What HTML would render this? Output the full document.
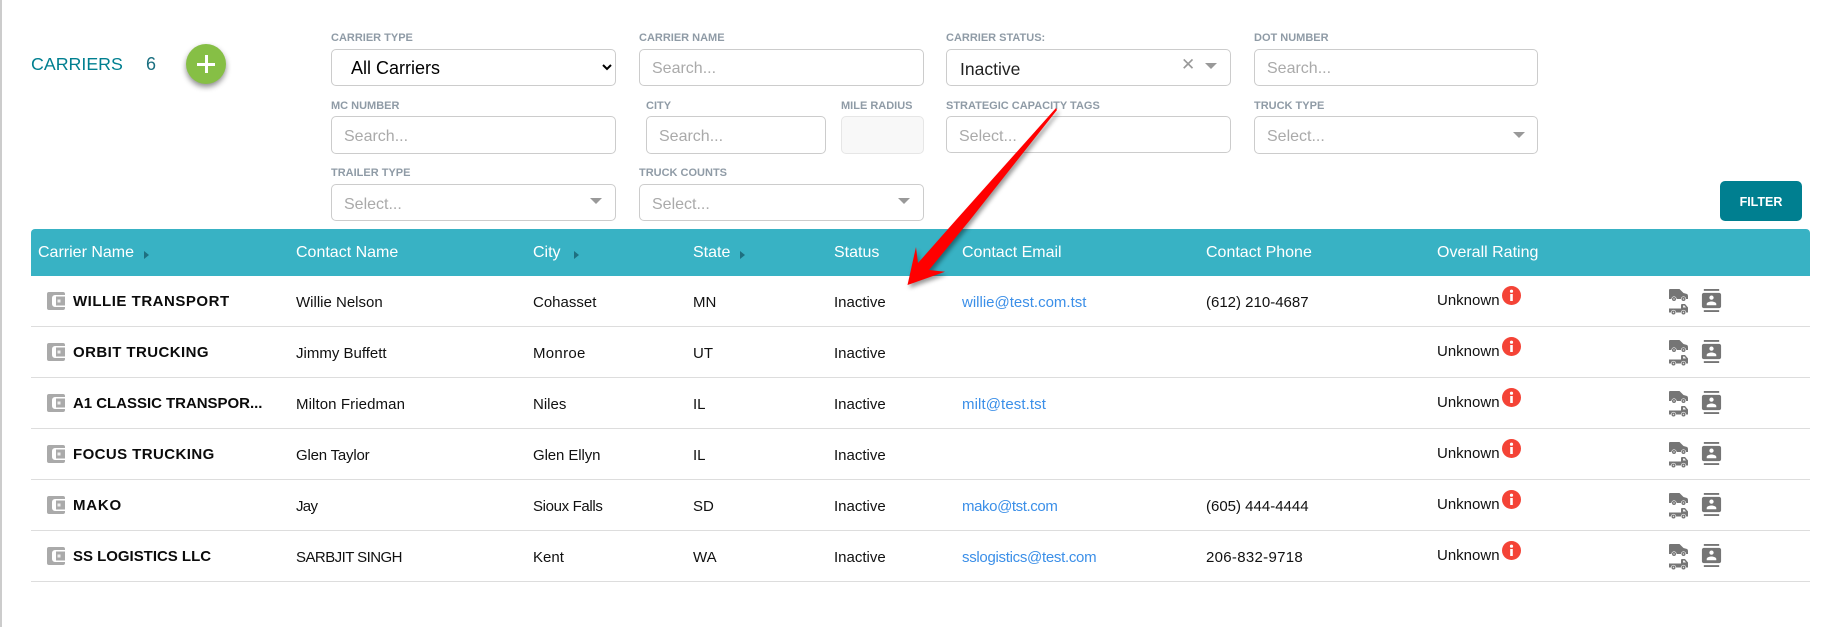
<!DOCTYPE html>
<html lang="en"><head><meta charset="utf-8"><title>Carriers</title>
<style>
*{box-sizing:border-box}
html,body{margin:0;padding:0;background:#fff}
body{width:1834px;height:627px;position:relative;overflow:hidden;font-family:"Liberation Sans",sans-serif;color:#111}
.edge{position:absolute;left:0;top:0;width:1.5px;height:627px;background:#ccc}
.title{position:absolute;left:31px;top:52.5px;font-size:17.8px;line-height:22px;color:#007f90}
.count{position:absolute;left:146px;top:52.5px;font-size:18px;line-height:22px;color:#1a6f80}
.add{position:absolute;left:186px;top:44px;width:40px;height:40px;border-radius:50%;background:#86bf45;box-shadow:0 3px 6px rgba(0,0,0,.45)}
.add:before{content:"";position:absolute;left:11px;top:18.5px;width:18px;height:3px;background:#fff}
.add:after{content:"";position:absolute;left:18.5px;top:11px;width:3px;height:18px;background:#fff}
label{position:absolute;font-size:11px;font-weight:700;line-height:13px;color:#8f9ba6;white-space:nowrap}
.f{position:absolute;border:1.5px solid #ccc;border-radius:5px;background:#fff;height:37px;font-family:"Liberation Sans",sans-serif;font-size:16px;padding:2px 0 0 12px;color:#111;outline:none}
.f.p4{padding-top:4px}
.f::placeholder{color:#aaa;opacity:1}
select.f{font-size:18px;padding:0 0 0 15px;color:#000}
.val{position:absolute;font-size:17.5px;line-height:20px;color:#222}
.tri{position:absolute;width:0;height:0;border-left:6px solid transparent;border-right:6px solid transparent;border-top:6.5px solid #999}
.x{position:absolute;font-size:17px;line-height:18px;color:#999}
.btn{position:absolute;left:1720px;top:181px;width:82px;height:40px;background:#007f90;border:0;border-radius:5px;color:#fff;font:700 12.5px/42px "Liberation Sans",sans-serif;padding:0;text-align:center}
table{position:absolute;left:31px;top:229px;width:1779px;border-collapse:collapse;table-layout:fixed}
th{height:47px;background:#38b2c4;color:#fff;font-weight:400;font-size:16px;text-align:left;padding:0;position:relative;top:0}
th:first-child{padding-left:7px;border-radius:4px 0 0 0}
th:last-child{border-radius:0 4px 0 0}
th span{position:relative;top:.5px}
td{height:51px;padding:0;border-bottom:1px solid #ddd;font-size:15px;white-space:nowrap;vertical-align:middle}
tbody tr:first-child td{height:50px}
td span.t{position:relative;top:2px}
td:first-child{padding-left:16px}
.n{font-weight:700;font-size:15px;letter-spacing:.52px;color:#0b0b0b;position:relative;top:.5px;margin-left:8px;vertical-align:middle}
.wal{vertical-align:middle;position:relative;top:0}
a{color:#3b8fe8;text-decoration:none}
.srt{display:inline-block;width:0;height:0;border-top:4px solid transparent;border-bottom:4px solid transparent;border-left:5px solid #1e6f80;margin-left:10px;position:relative;top:2px}
.srt.c{margin-left:13px}
.unk{position:relative;top:0}
.info{position:absolute;margin:-6px 0 0 2px}
.r{position:relative}
.ic{position:absolute}
.arrow{position:absolute;left:0;top:0;filter:drop-shadow(2px 3px 2px rgba(0,0,0,.4));pointer-events:none}
</style></head><body>
<div class="edge"></div>
<div class="title">CARRIERS</div><div class="count">6</div><div class="add"></div>

<label style="left:331px;top:32px">CARRIER TYPE</label>
<select class="f" style="left:331px;top:49px;width:285px"><option>All Carriers</option></select>
<label style="left:639px;top:32px">CARRIER NAME</label>
<input class="f" style="left:639px;top:49px;width:285px" placeholder="Search...">
<label style="left:946px;top:32px">CARRIER STATUS:</label>
<div class="f" style="left:946px;top:49px;width:285px"></div>
<div class="val" style="left:960px;top:59px">Inactive</div>
<div class="x" style="left:1181px;top:56px">✕</div>
<div class="tri" style="left:1204.5px;top:63px"></div>
<label style="left:1254px;top:32px">DOT NUMBER</label>
<input class="f" style="left:1254px;top:49px;width:284px" placeholder="Search...">

<label style="left:331px;top:99.5px">MC NUMBER</label>
<input class="f p4" style="left:331px;top:116px;width:285px;height:38px" placeholder="Search...">
<label style="left:646px;top:99.5px">CITY</label>
<input class="f p4" style="left:646px;top:116px;width:180px;height:38px" placeholder="Search...">
<label style="left:841px;top:99.5px">MILE RADIUS</label>
<div class="f" style="left:841px;top:116px;width:83px;height:38px;background:#f8f8f8;border-color:#e6e6e6"></div>
<label style="left:946px;top:99.5px">STRATEGIC CAPACITY TAGS</label>
<input class="f p4" style="left:946px;top:116px;width:285px" placeholder="Select...">
<label style="left:1254px;top:99.5px">TRUCK TYPE</label>
<input class="f p4" style="left:1254px;top:116px;width:284px;height:38px" placeholder="Select...">
<div class="tri" style="left:1513px;top:132px"></div>

<label style="left:331px;top:167px">TRAILER TYPE</label>
<input class="f p4" style="left:331px;top:184px;width:285px" placeholder="Select...">
<div class="tri" style="left:589.5px;top:198px"></div>
<label style="left:639px;top:167px">TRUCK COUNTS</label>
<input class="f p4" style="left:639px;top:184px;width:285px" placeholder="Select...">
<div class="tri" style="left:898px;top:198px"></div>
<button class="btn">FILTER</button>

<svg width="0" height="0" style="position:absolute"><defs>
<symbol id="wal" viewBox="0 0 18 18"><path fill="#aaa" d="M2 0h14a2 2 0 0 1 2 2v1H8a3 3 0 0 0-3 3v6a3 3 0 0 0 3 3h10v1a2 2 0 0 1-2 2H2a2 2 0 0 1-2-2V2a2 2 0 0 1 2-2z"/><path fill="#aaa" d="M9 4.5h9v9H9z"/><path fill="#fff" d="M16 3h2v1.5h-2zM16 13.500h2v1.500h-2z"/><rect x="10.500" y="7.500" width="3" height="3" fill="#eee"/></symbol>
<symbol id="trk" viewBox="0 0 19 26"><path fill="#757575" d="M0 1Q0 0 1 0H10.500L14.500 4L18 5Q19 5.500 19 7.500V10H0Z"/><circle cx="5" cy="10" r="2.300" fill="#757575" stroke="#fff" stroke-width=".6"/><circle cx="14.500" cy="10" r="2.300" fill="#757575" stroke="#fff" stroke-width=".6"/><circle cx="5" cy="10" r=".7" fill="#ddd"/><circle cx="14.500" cy="10" r=".7" fill="#ddd"/><path fill="#757575" d="M12 16Q12 15 13 15H16L19 18.500V23.500H0V19.500H12Z"/><path fill="#eee" d="M14 16.500h1.500l1.500 2h-3z"/><circle cx="4.500" cy="23.500" r="2.300" fill="#757575" stroke="#fff" stroke-width=".6"/><circle cx="14.500" cy="23.500" r="2.300" fill="#757575" stroke="#fff" stroke-width=".6"/><circle cx="4.500" cy="23.500" r=".7" fill="#ddd"/><circle cx="14.500" cy="23.500" r=".7" fill="#ddd"/></symbol>
<symbol id="con" viewBox="0 0 24 24"><path fill="#757575" d="M20 0H4v2h16V0zM4 24h16v-2H4v2zM20 4H4c-1.100 0-2 .9-2 2v12c0 1.100.9 2 2 2h16c1.100 0 2-.9 2-2V6c0-1.100-.9-2-2-2zm-8 2.750c1.240 0 2.250 1.010 2.250 2.250s-1.010 2.250-2.250 2.250S9.750 10.240 9.750 9 10.760 6.750 12 6.750zM17 17H7v-1.500c0-1.670 3.330-2.500 5-2.500s5 .83 5 2.500V17z"/></symbol>
<symbol id="inf" viewBox="0 0 19 19"><circle cx="9.500" cy="9.500" r="9.500" fill="#f44336"/><rect x="8.200" y="8" width="2.600" height="7" fill="#fff"/><circle cx="9.500" cy="5.200" r="1.600" fill="#fff"/></symbol>
</defs></svg>

<table>
<colgroup><col style="width:265px"><col style="width:237px"><col style="width:160px"><col style="width:141px"><col style="width:128px"><col style="width:244px"><col style="width:231px"><col style="width:232px"><col style="width:141px"></colgroup>
<thead><tr><th><span>Carrier Name</span><i class="srt"></i></th><th><span>Contact Name</span></th><th><span>City</span><i class="srt c"></i></th><th><span>State</span><i class="srt"></i></th><th><span>Status</span></th><th><span>Contact Email</span></th><th><span>Contact Phone</span></th><th><span>Overall Rating</span></th><th></th></tr></thead>
<tbody>
<tr><td><svg class="wal" width="18" height="18"><use href="#wal"/></svg><span class="n">WILLIE TRANSPORT</span></td><td><span class="t">Willie Nelson</span></td><td><span class="t">Cohasset</span></td><td><span class="t">MN</span></td><td><span class="t">Inactive</span></td><td><span class="t"><a>willie@test.com.tst</a></span></td><td><span class="t">(612) 210-4687</span></td><td><span class="unk">Unknown</span><svg class="info" width="19" height="19"><use href="#inf"/></svg></td><td class="r"><svg class="ic" style="left:0;top:13px" width="19" height="26"><use href="#trk"/></svg><svg class="ic" style="left:31px;top:13px" width="23" height="23"><use href="#con"/></svg></td></tr>
<tr><td><svg class="wal" width="18" height="18"><use href="#wal"/></svg><span class="n" style="letter-spacing:.43px">ORBIT TRUCKING</span></td><td><span class="t">Jimmy Buffett</span></td><td><span class="t" style="letter-spacing:.3px">Monroe</span></td><td><span class="t">UT</span></td><td><span class="t">Inactive</span></td><td></td><td></td><td><span class="unk">Unknown</span><svg class="info" width="19" height="19"><use href="#inf"/></svg></td><td class="r"><svg class="ic" style="left:0;top:13px" width="19" height="26"><use href="#trk"/></svg><svg class="ic" style="left:31px;top:13px" width="23" height="23"><use href="#con"/></svg></td></tr>
<tr><td><svg class="wal" width="18" height="18"><use href="#wal"/></svg><span class="n" style="letter-spacing:-.03px">A1 CLASSIC TRANSPOR...</span></td><td><span class="t" style="letter-spacing:.1px">Milton Friedman</span></td><td><span class="t">Niles</span></td><td><span class="t">IL</span></td><td><span class="t">Inactive</span></td><td><span class="t" style="letter-spacing:.1px"><a>milt@test.tst</a></span></td><td></td><td><span class="unk">Unknown</span><svg class="info" width="19" height="19"><use href="#inf"/></svg></td><td class="r"><svg class="ic" style="left:0;top:13px" width="19" height="26"><use href="#trk"/></svg><svg class="ic" style="left:31px;top:13px" width="23" height="23"><use href="#con"/></svg></td></tr>
<tr><td><svg class="wal" width="18" height="18"><use href="#wal"/></svg><span class="n" style="letter-spacing:.42px">FOCUS TRUCKING</span></td><td><span class="t" style="letter-spacing:-.2px">Glen Taylor</span></td><td><span class="t" style="letter-spacing:-.1px">Glen Ellyn</span></td><td><span class="t">IL</span></td><td><span class="t">Inactive</span></td><td></td><td></td><td><span class="unk">Unknown</span><svg class="info" width="19" height="19"><use href="#inf"/></svg></td><td class="r"><svg class="ic" style="left:0;top:13px" width="19" height="26"><use href="#trk"/></svg><svg class="ic" style="left:31px;top:13px" width="23" height="23"><use href="#con"/></svg></td></tr>
<tr><td><svg class="wal" width="18" height="18"><use href="#wal"/></svg><span class="n" style="letter-spacing:.8px">MAKO</span></td><td><span class="t" style="letter-spacing:-.7px">Jay</span></td><td><span class="t" style="letter-spacing:-.35px">Sioux Falls</span></td><td><span class="t">SD</span></td><td><span class="t">Inactive</span></td><td><span class="t" style="letter-spacing:-.4px"><a>mako@tst.com</a></span></td><td><span class="t">(605) 444-4444</span></td><td><span class="unk">Unknown</span><svg class="info" width="19" height="19"><use href="#inf"/></svg></td><td class="r"><svg class="ic" style="left:0;top:13px" width="19" height="26"><use href="#trk"/></svg><svg class="ic" style="left:31px;top:13px" width="23" height="23"><use href="#con"/></svg></td></tr>
<tr><td><svg class="wal" width="18" height="18"><use href="#wal"/></svg><span class="n" style="letter-spacing:-.02px">SS LOGISTICS LLC</span></td><td><span class="t" style="letter-spacing:-.55px">SARBJIT SINGH</span></td><td><span class="t">Kent</span></td><td><span class="t">WA</span></td><td><span class="t">Inactive</span></td><td><span class="t" style="letter-spacing:-.3px"><a>sslogistics@test.com</a></span></td><td><span class="t" style="letter-spacing:.3px">206-832-9718</span></td><td><span class="unk">Unknown</span><svg class="info" width="19" height="19"><use href="#inf"/></svg></td><td class="r"><svg class="ic" style="left:0;top:13px" width="19" height="26"><use href="#trk"/></svg><svg class="ic" style="left:31px;top:13px" width="23" height="23"><use href="#con"/></svg></td></tr>
</tbody></table>

<svg class="arrow" width="1834" height="627"><polygon fill="#f00" points="1056,108 1057,110 970,220 929,270 945,271.700 907.500,285 916,247 918,263 956,220"/></svg>
</body></html>
